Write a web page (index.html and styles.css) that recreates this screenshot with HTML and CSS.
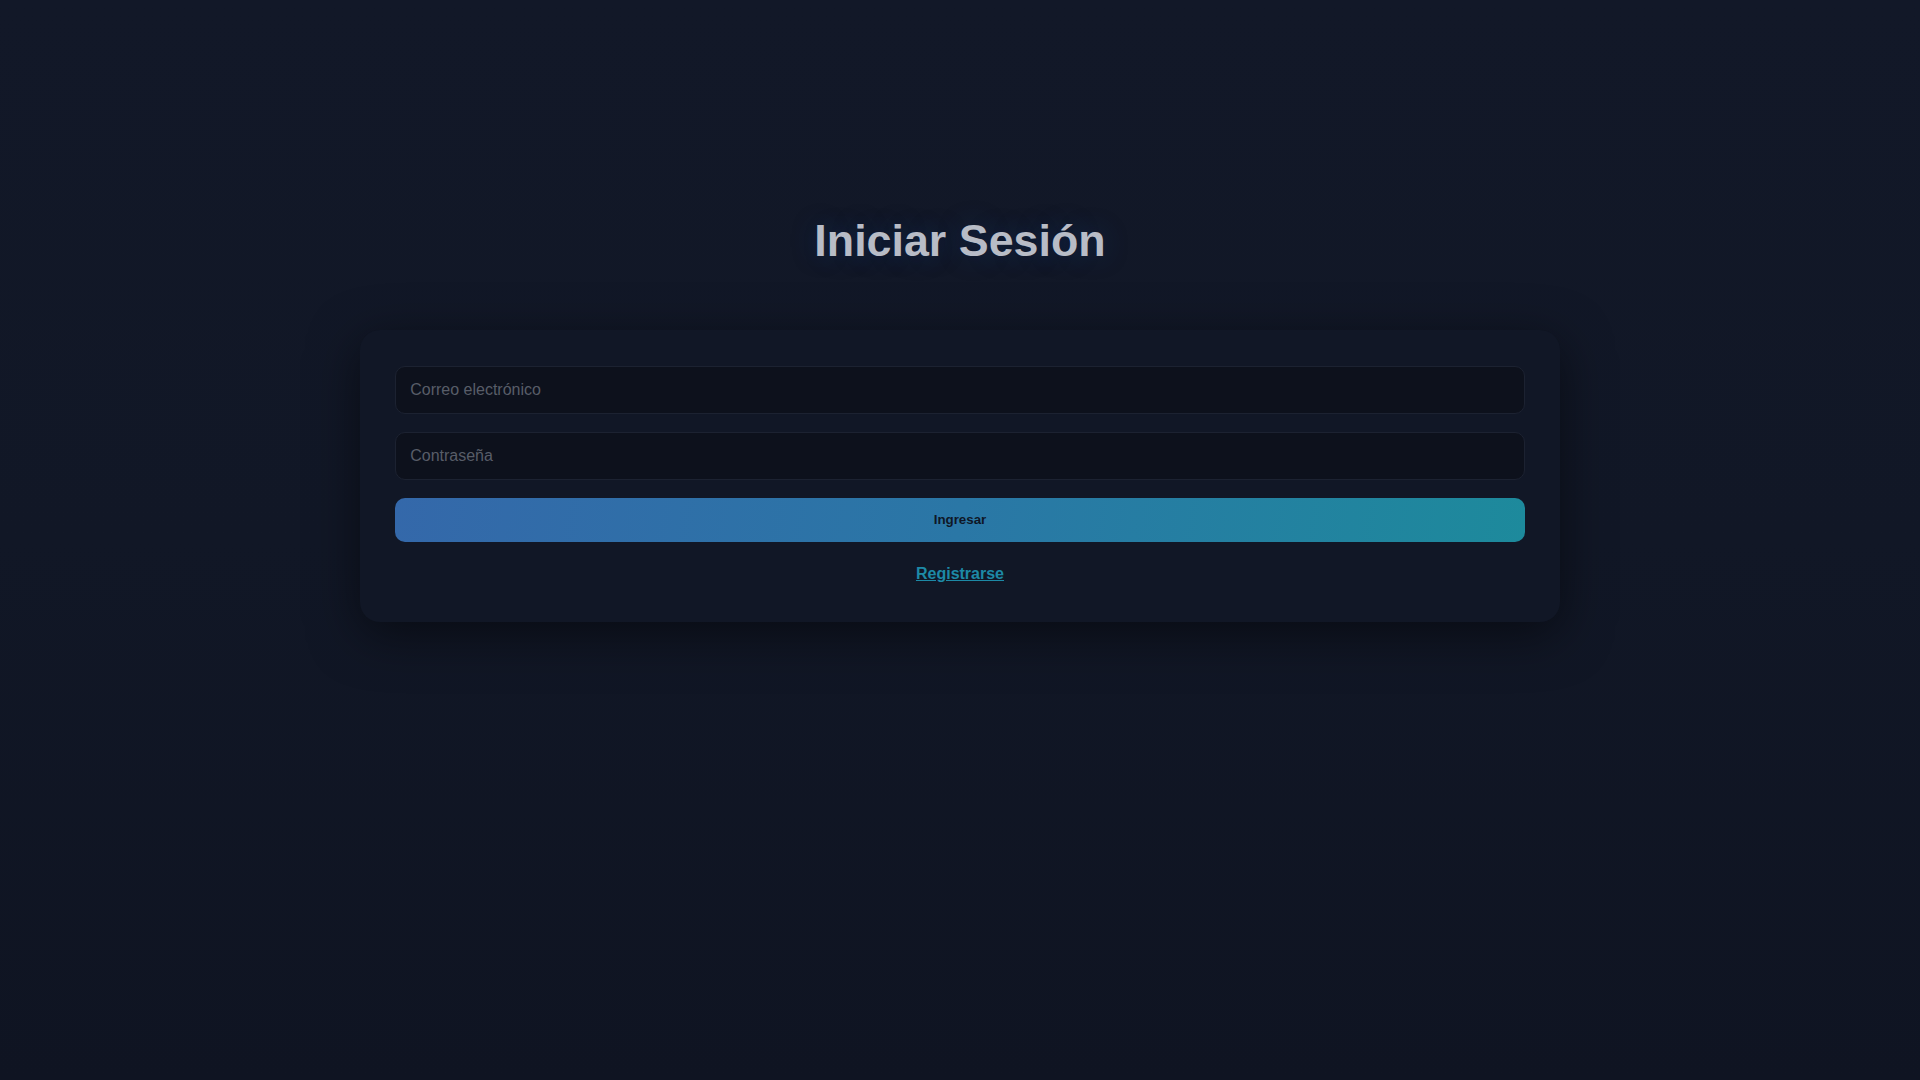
FILE: index.html
```html
<!DOCTYPE html>
<html lang="es">
<head>
<meta charset="utf-8">
<title>Iniciar Sesión</title>
<link rel="stylesheet" href="styles.css">
</head>
<body>
  <main class="page">
    <h1 class="title">Iniciar Sesión</h1>
    <form class="card" onsubmit="return false">
      <input class="field" type="email" placeholder="Correo electrónico">
      <input class="field" type="password" placeholder="Contraseña">
      <button class="btn" type="submit">Ingresar</button>
      <div class="alt"><a class="link" href="#">Registrarse</a></div>
    </form>
  </main>
</body>
</html>
```

FILE: styles.css
```css
html, body {
  margin: 0;
  height: 100%;
}
body {
  background: linear-gradient(180deg, #121828 0%, #111726 50%, #0f1422 100%);
  font-family: "Liberation Sans", Arial, sans-serif;
  color: #b9bdc7;
}
.page {
  display: flex;
  flex-direction: column;
  align-items: center;
  padding-top: 215px;
}
.title {
  margin: 0 0 64px 0;
  font-size: 44.8px;
  font-weight: 700;
  line-height: normal;
  color: #b8bcc6;
  text-shadow: 0 0 24px rgba(20, 70, 140, 0.35);
}
.card {
  box-sizing: border-box;
  width: 1200px;
  padding: 35.5px 35.2px 35px 35.2px;
  background: #111726;
  border-radius: 20px;
  box-shadow: 0 12px 50px rgba(0, 0, 0, 0.5);
  display: flex;
  flex-direction: column;
}
.field {
  box-sizing: border-box;
  height: 48px;
  margin: 0 0 18.2px 0;
  padding: 0 14px;
  background: #0d111c;
  border: 1px solid #1c2231;
  border-radius: 10px;
  font-family: "Liberation Sans", Arial, sans-serif;
  font-size: 16px;
  color: #c8ccd4;
  outline: none;
}
.field::placeholder {
  color: #585d68;
}
.btn {
  height: 44px;
  border: none;
  border-radius: 10px;
  background: linear-gradient(100deg, #3468aa 0%, #2a77a6 50%, #1d8a9c 100%);
  font-family: "Liberation Sans", Arial, sans-serif;
  font-size: 13.333px;
  font-weight: 700;
  color: #0f1726;
  cursor: pointer;
}
.alt {
  margin: 23.5px 0 3px 0;
  text-align: center;
  line-height: 18.4px;
}
.link {
  font-size: 16px;
  font-weight: 700;
  color: #1d89a6;
  text-decoration: underline;
}
```
